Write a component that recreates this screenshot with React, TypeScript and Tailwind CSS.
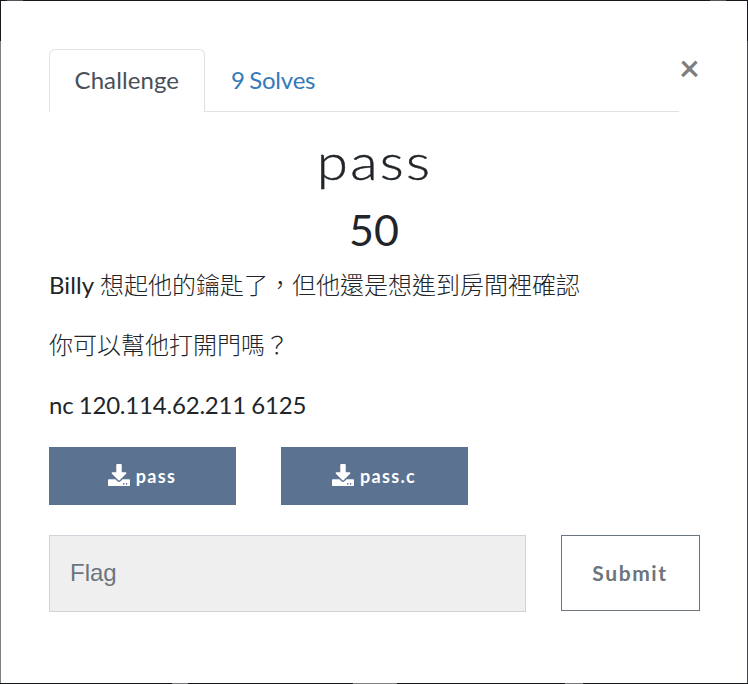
import React from "react";
import { FaDownload } from "react-icons/fa";

function FileButton({ name }: { name: string }) {
  return (
    <button className="flex h-[58px] w-[187px] items-center justify-center gap-[6px] bg-[#5b7290] pr-px pb-[2px] text-white">
      <FaDownload className="size-[22px]" />
      <span className="pt-[2px] text-[18px] leading-none font-bold tracking-[1.3px]">{name}</span>
    </button>
  );
}

function Chinese({ children }: { children: React.ReactNode }) {
  return <span className="font-light">{children}</span>;
}

export default function App() {
  return (
    <div className="flex h-[684px] w-[748px] flex-col bg-white font-['Lato','Noto_Sans_CJK_TC',sans-serif] text-[24px] leading-[36px] text-[#212529]">
      <div className="flex h-px shrink-0 bg-[#17181d]">
        <div className="ml-[7px] h-px w-4 bg-[#55565a]" />
        <div className="ml-[687px] h-px w-4 bg-[#55565a]" />
      </div>
      <div className="flex grow">
        <div className="flex w-px shrink-0 flex-col">
          <div className="h-10 bg-[#17181d]" />
          <div className="grow bg-[#808080]" />
        </div>
        <main className="w-[746px] px-12 pt-12">
          <div className="flex w-[651px] items-start">
            <nav className="flex h-[63px] w-[630px] shrink-0">
              <div className="w-[156px] rounded-t-[6px] border border-b-0 border-[#dee2e6] pt-[12px] pl-[24.5px] tracking-[0.1px] text-[#495057]">
                Challenge
              </div>
              <div className="grow border-b border-[#dee2e6] pt-[13px] pl-[26px] tracking-[-0.2px] [word-spacing:-1.5px] text-[#337ab7]">9 Solves</div>
            </nav>
            <button className="h-9 w-[21px] text-left text-[36px] leading-[36px] font-bold text-black/50">×</button>
          </div>
          <h3 className="mt-[20px] scale-x-[1.13] pl-px text-center text-[50px] leading-[58px] font-light tracking-[2px] [-webkit-text-stroke:0.4px_#212529]">pass</h3>
          <h4 className="mt-[14px] text-center text-[43px] leading-[52px]">50</h4>
          <div className="mt-[11px]">
            <p><span className="tracking-[0.1px]">Billy </span><Chinese>想起他的鑰匙了，但他還是想進到房間裡確認</Chinese></p>
            <p className="mt-6"><Chinese>你可以幫他打開門嗎？</Chinese></p>
            <p className="mt-6 tracking-[-0.2px] [word-spacing:-0.7px]">nc 120.114.62.211 6125</p>
          </div>
          <div className="mt-6 flex gap-[45px]">
            <FileButton name="pass" />
            <FileButton name="pass.c" />
          </div>
          <div className="mt-[30px] flex w-[651px] items-start">
            <div className="h-[77px] w-[477px] shrink-0 border border-[#ced4da] bg-[#efefef] pt-[19px] pl-5 font-['Liberation_Sans',Arial,sans-serif] text-[#6c757d]">Flag</div>
            <button className="ml-[35px] h-[76px] w-[139px] shrink-0 border border-[#6c757d] pr-px text-[21px] font-bold tracking-[1.6px] text-[#6c757d]">Submit</button>
          </div>
        </main>
        <div className="flex w-px shrink-0 flex-col">
          <div className="h-10 bg-[#17181d]" />
          <div className="grow bg-[#48484c]" />
        </div>
      </div>
      <div className="flex h-px shrink-0 bg-[#18191c]">
        <div className="ml-[172px] h-px w-4 bg-[#77777a]" />
        <div className="ml-[165px] h-px w-[44px] bg-[#808080]" />
        <div className="ml-[168px] h-px w-[18px] bg-[#77777a]" />
      </div>
    </div>
  );
}
